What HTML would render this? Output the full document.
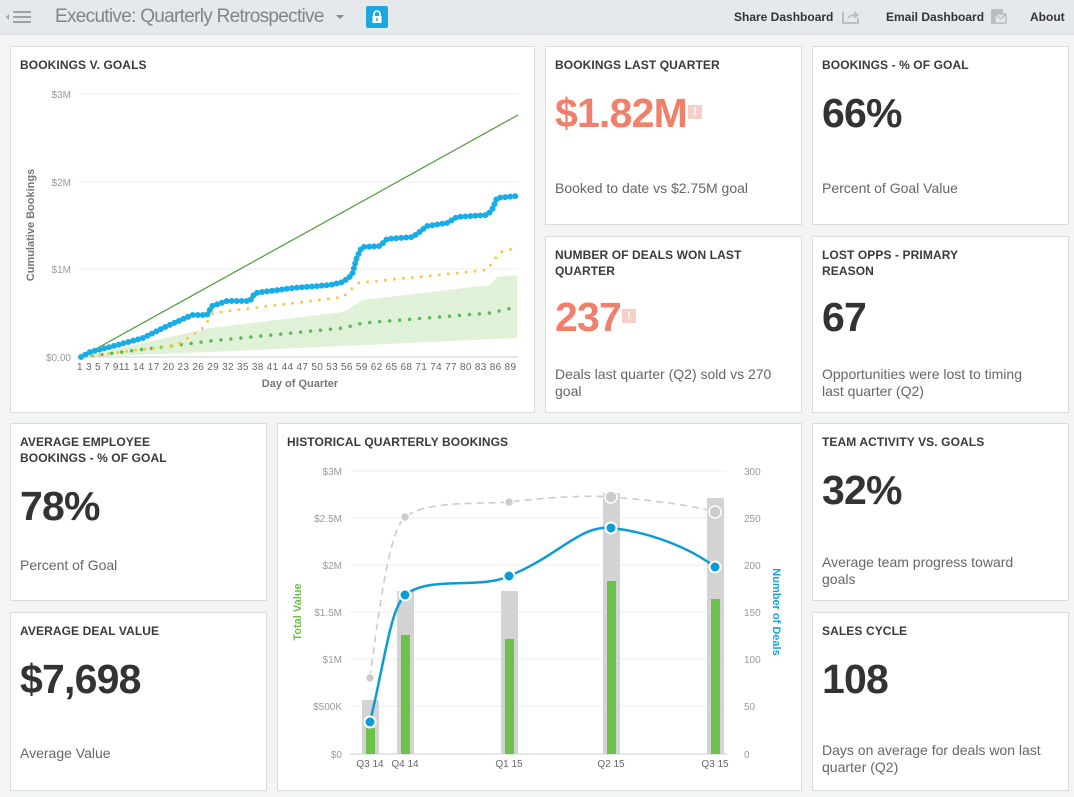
<!DOCTYPE html>
<html><head><meta charset="utf-8"><style>
*{margin:0;padding:0;box-sizing:border-box}
body{width:1074px;height:797px;background:#f3f4f4;font-family:"Liberation Sans",sans-serif;position:relative;overflow:hidden}
.hdr{position:absolute;left:0;top:0;width:1074px;height:35px;background:#e5e9ec;border-bottom:1px solid #d9dde0}
.card{position:absolute;background:#fff;border:1px solid #dcdcdc}
.t{position:absolute;left:9px;top:10px;font-size:12px;font-weight:bold;color:#3a3a3a;line-height:16px;letter-spacing:0.1px}
.n{position:absolute;left:9px;font-size:41px;font-weight:bold;color:#333;line-height:42px;letter-spacing:-0.8px}
.s{position:absolute;left:9px;font-size:14px;color:#666;line-height:17px}
.red{color:#f0806a}
.hl{position:absolute;top:10px;font-size:12px;font-weight:bold;color:#333}
</style></head><body>
<div class="hdr">
<svg style="position:absolute;left:4px;top:8px" width="32" height="18"><path d="M5 6 L2 9 L5 12Z" fill="#9aa3aa"/><rect x="9" y="3" width="18" height="2" fill="#9aa3aa"/><rect x="9" y="8" width="18" height="2" fill="#9aa3aa"/><rect x="9" y="13" width="18" height="2" fill="#9aa3aa"/></svg>
<div style="position:absolute;left:55px;top:6px;font-size:19px;color:#7f858a;letter-spacing:-0.7px">Executive: Quarterly Retrospective</div>
<svg style="position:absolute;left:335px;top:14px" width="10" height="6"><path d="M1 1 L9 1 L5 5Z" fill="#888"/></svg>
<div style="position:absolute;left:366px;top:6px;width:22px;height:22px;background:#1ba8e0;border-radius:2px"><svg width="22" height="22"><path d="M8 10 V8 a3 3 0 0 1 6 0 V10" stroke="#fff" stroke-width="1.6" fill="none"/><rect x="6.5" y="10" width="9" height="7" fill="#fff"/><rect x="10.3" y="12" width="1.4" height="3" fill="#1ba8e0"/></svg></div>
<div class="hl" style="left:734px">Share Dashboard</div>
<svg style="position:absolute;left:842px;top:9px" width="18" height="15"><path d="M1 3 V14 H16 V9" stroke="#b9bec2" stroke-width="2" fill="none"/><path d="M5 11 Q6 5 12 5 V2 L17 6 L12 10 V7 Q8 7 5 11Z" fill="#b9bec2"/></svg>
<div class="hl" style="left:886px">Email Dashboard</div>
<svg style="position:absolute;left:990px;top:8px" width="18" height="17"><rect x="1" y="1" width="12" height="15" fill="#b9bec2"/><rect x="5" y="6" width="11" height="9" fill="#e5e9ec" stroke="#b9bec2" stroke-width="1.5"/><path d="M5 6 L10.5 11 L16 6" stroke="#b9bec2" stroke-width="1.3" fill="none"/></svg>
<div class="hl" style="left:1030px">About</div>
</div>

<div class="card" style="left:10px;top:46px;width:525px;height:367px"><div class="t">BOOKINGS V. GOALS</div></div>
<svg style="position:absolute;left:0;top:0" width="540" height="400" font-family="Liberation Sans" >
<g stroke="#eee" stroke-width="1"><line x1="78" y1="94" x2="518" y2="94"/><line x1="78" y1="182" x2="518" y2="182"/><line x1="78" y1="269" x2="518" y2="269"/></g>
<line x1="78" y1="357" x2="518" y2="357" stroke="#ccc"/>
<g font-size="10" fill="#999" text-anchor="end"><text x="71" y="98">$3M</text><text x="71" y="186">$2M</text><text x="71" y="273">$1M</text><text x="71" y="361">$0.00</text></g>
<text x="0" y="0" transform="translate(34,225) rotate(-90)" font-size="11" font-weight="bold" fill="#777" text-anchor="middle">Cumulative Bookings</text>
<text x="300" y="387" font-size="11" font-weight="bold" fill="#777" text-anchor="middle">Day of Quarter</text>
<text x="77" y="370" font-size="10" fill="#666" textLength="439" lengthAdjust="spacing">1 3 5 7 911 14 17 20 23 26 29 32 35 38 41 44 47 50 53 56 59 62 65 68 71 74 77 80 83 86 89</text>
<path d="M82 357 L210 328 L343 312 L363 300 L490 285 L497 277 L517 275 L517 338 L343 346 L210 352 L82 357Z" fill="#dff2d8"/>
<line x1="85" y1="355" x2="518" y2="115" stroke="#4b9a3a" stroke-width="1.2"/>
<path d="M82 357 L210 341 L343 328 L363 323 L490 313 L517 307" stroke="#5cb85c" stroke-width="3.5" stroke-linecap="round" stroke-dasharray="0 10" fill="none"/>
<path d="M82 357 L177 345 L203 328 L213 313 L343 297 L358 283 L487 270 L500 252 L517 248" stroke="#fdc44f" stroke-width="3" stroke-linecap="round" stroke-dasharray="0 9" fill="none"/>
<path d="M81 357 L90 352 L110 347 L143 338 L163 328 L192 315 L207 315 L212 306 L227 301 L250 301 L255 293 L293 288 L330 285 L343 282 L352 275 L357 257 L362 247 L380 246 L387 239 L413 237 L427 226 L447 223 L457 217 L487 215 L492 210 L497 198 L517 196" stroke="#18aee5" stroke-width="6" stroke-linecap="round" stroke-dasharray="0 5" fill="none"/>
</svg>

<div class="card" style="left:545px;top:46px;width:257px;height:179px"><div class="t">BOOKINGS LAST QUARTER</div><div class="n red" style="top:45px">$1.82M <span style="display:inline-block;width:14px;height:14px;background:#f8cfc6;color:#fff;font-size:11px;line-height:14px;text-align:center;vertical-align:middle;position:relative;top:-4px;left:-10px">!</span></div><div class="s" style="top:133px">Booked to date vs $2.75M goal</div></div>
<div class="card" style="left:812px;top:46px;width:257px;height:179px"><div class="t">BOOKINGS - % OF GOAL</div><div class="n" style="top:45px">66%</div><div class="s" style="top:133px">Percent of Goal Value</div></div>
<div class="card" style="left:545px;top:236px;width:257px;height:177px"><div class="t">NUMBER OF DEALS WON LAST<br>QUARTER</div><div class="n red" style="top:59px">237 <span style="display:inline-block;width:14px;height:14px;background:#f8cfc6;color:#fff;font-size:11px;line-height:14px;text-align:center;vertical-align:middle;position:relative;top:-4px;left:-10px">!</span></div><div class="s" style="top:129px">Deals last quarter (Q2) sold vs 270<br>goal</div></div>
<div class="card" style="left:812px;top:236px;width:257px;height:177px"><div class="t">LOST OPPS - PRIMARY<br>REASON</div><div class="n" style="top:59px">67</div><div class="s" style="top:129px">Opportunities were lost to timing<br>last quarter (Q2)</div></div>
<div class="card" style="left:10px;top:423px;width:257px;height:178px"><div class="t">AVERAGE EMPLOYEE<br>BOOKINGS - % OF GOAL</div><div class="n" style="top:61px">78%</div><div class="s" style="top:133px">Percent of Goal</div></div>
<div class="card" style="left:812px;top:423px;width:257px;height:178px"><div class="t">TEAM ACTIVITY VS. GOALS</div><div class="n" style="top:45px">32%</div><div class="s" style="top:130px">Average team progress toward<br>goals</div></div>
<div class="card" style="left:10px;top:612px;width:257px;height:179px"><div class="t">AVERAGE DEAL VALUE</div><div class="n" style="top:45px">$7,698</div><div class="s" style="top:132px">Average Value</div></div>
<div class="card" style="left:812px;top:612px;width:257px;height:179px"><div class="t">SALES CYCLE</div><div class="n" style="top:45px">108</div><div class="s" style="top:129px">Days on average for deals won last<br>quarter (Q2)</div></div>

<div class="card" style="left:277px;top:423px;width:525px;height:368px"><div class="t">HISTORICAL QUARTERLY BOOKINGS</div></div>
<svg style="position:absolute;left:0;top:0" width="810" height="797" font-family="Liberation Sans">
<g stroke="#eee"><line x1="350" y1="471" x2="727" y2="471"/><line x1="350" y1="518" x2="727" y2="518"/><line x1="350" y1="565" x2="727" y2="565"/><line x1="350" y1="612" x2="727" y2="612"/><line x1="350" y1="659" x2="727" y2="659"/><line x1="350" y1="706" x2="727" y2="706"/></g>
<line x1="350" y1="754" x2="727" y2="754" stroke="#ccc"/>
<g font-size="10" fill="#999" text-anchor="end"><text x="342" y="475">$3M</text><text x="342" y="522">$2.5M</text><text x="342" y="569">$2M</text><text x="342" y="616">$1.5M</text><text x="342" y="663">$1M</text><text x="342" y="710">$500K</text><text x="342" y="758">$0</text></g>
<g font-size="10" fill="#999"><text x="744" y="475">300</text><text x="744" y="522">250</text><text x="744" y="569">200</text><text x="744" y="616">150</text><text x="744" y="663">100</text><text x="744" y="710">50</text><text x="744" y="758">0</text></g>
<text transform="translate(301,612) rotate(-90)" font-size="11" font-weight="bold" fill="#6cc24a" text-anchor="middle">Total Value</text>
<text transform="translate(773,612) rotate(90)" font-size="11" font-weight="bold" fill="#1aa3d9" text-anchor="middle">Number of Deals</text>
<g font-size="10" fill="#666" text-anchor="middle"><text x="370" y="767">Q3 14</text><text x="405" y="767">Q4 14</text><text x="509" y="767">Q1 15</text><text x="611" y="767">Q2 15</text><text x="715" y="767">Q3 15</text></g>
<g fill="#d3d3d3"><rect x="362" y="700" width="17" height="54"/><rect x="397" y="591" width="17" height="163"/><rect x="501" y="591" width="17" height="163"/><rect x="603" y="493" width="17" height="261"/><rect x="707" y="498" width="17" height="256"/></g>
<g fill="#6cc24a"><rect x="366" y="728" width="9" height="26"/><rect x="401" y="635" width="9" height="119"/><rect x="505" y="639" width="9" height="115"/><rect x="607" y="581" width="9" height="173"/><rect x="711" y="599" width="9" height="155"/></g>
<path d="M370 678 C380 600,390 530,405 517 C430 500,470 505,509 502 C550 497,590 495,611 497 C650 500,690 505,715 512" stroke="#ccc" stroke-width="1.6" stroke-dasharray="7 5" fill="none"/>
<g fill="#ccc" stroke="#fff" stroke-width="1.5"><circle cx="370" cy="678" r="4.5"/><circle cx="405" cy="517" r="4.5"/><circle cx="509" cy="502" r="4.5"/><circle cx="611" cy="497" r="6"/><circle cx="715" cy="512" r="6"/></g>
<path d="M370 722 C385 660,390 610,405 595 C430 575,480 590,509 576 C560 555,580 525,611 528 C650 532,690 548,715 567" stroke="#0a9cd5" stroke-width="2.5" fill="none"/>
<g fill="#0a9cd5" stroke="#fff" stroke-width="2"><circle cx="370" cy="722" r="5.5"/><circle cx="405" cy="595" r="5.5"/><circle cx="509" cy="576" r="5.5"/><circle cx="611" cy="528" r="5.5"/><circle cx="715" cy="567" r="5.5"/></g>
</svg>
</body></html>
